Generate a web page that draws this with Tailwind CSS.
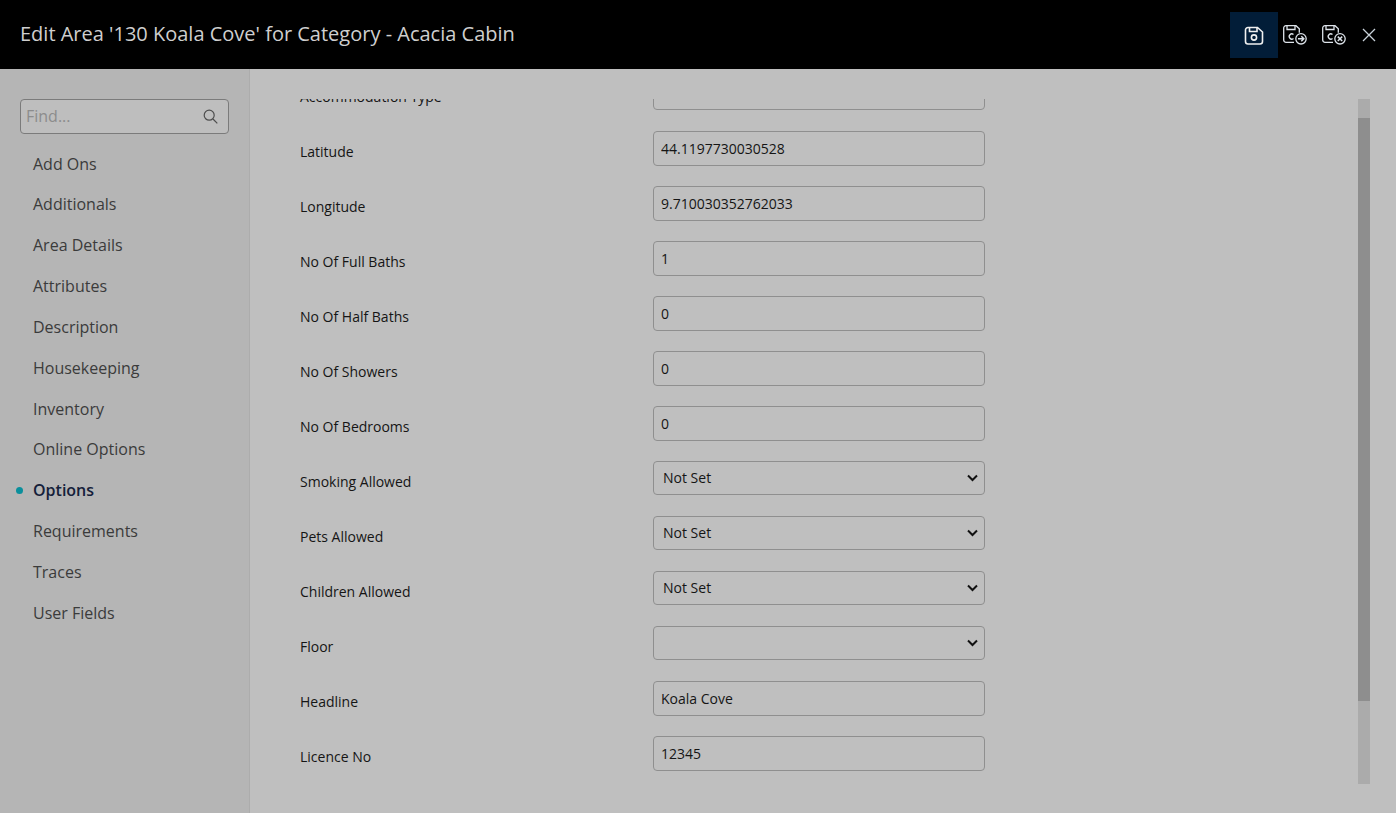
<!DOCTYPE html>
<html lang="en">
<head>
    <meta charset="UTF-8">
    <title>Edit Area</title>
    <script src="https://cdn.jsdelivr.net/npm/@tailwindcss/browser@4"></script>
</head>
<body class="h-[813px] w-[1396px] overflow-hidden bg-[#bfbfbf] font-['Open_Sans',sans-serif] text-[14px] text-[#151515]">

<!-- header -->
<header class="flex h-[69px] items-center justify-between bg-black pl-[20px] pr-[19px]">
    <h1 class="text-[20px] leading-[28px] -mt-[2px] text-[#cfcfcf]">Edit Area '130 Koala Cove' for Category - Acacia Cabin</h1>
    <div class="flex items-center mt-[1px]">
        <button class="flex h-[46px] w-[48px] items-center justify-center bg-[#021d38] text-[#f0f0f0]">
            <svg width="20" height="19" viewBox="0 0 20 19" fill="none" stroke="currentColor" stroke-width="1.600"><path d="M1.500 4A2.500 2.500 0 0 1 4 1.500h9.500l5 4.500v9.500a2.500 2.500 0 0 1-2.500 2.500H4a2.500 2.500 0 0 1-2.500-2.500z"/><path d="M5.500 1.500v4h7.500v-4"/><circle cx="10" cy="11.500" r="2.600"/></svg>
        </button>
        <button class="ml-[4px] flex h-[46px] w-[26px] items-center justify-center text-[#dde3ea]">
            <svg width="24" height="20" viewBox="0 0 24 20" fill="none" stroke="currentColor" stroke-width="1.300"><path d="M11 17.300H3a2.300 2.300 0 0 1-2.300-2.300V3A2.300 2.300 0 0 1 3 .7h10l3.300 3v4"/><path d="M4 .7v3.800h8V.7"/><path d="M10.500 9.500a2.600 2.600 0 1 0 0 4"/><circle cx="18" cy="13.800" r="5.200"/><path d="M15 13.800h5.800M18.300 11.300l2.500 2.500-2.500 2.500" stroke-width="1.500"/></svg>
        </button>
        <button class="ml-[13px] flex h-[46px] w-[26px] items-center justify-center text-[#dde3ea]">
            <svg width="24" height="20" viewBox="0 0 24 20" fill="none" stroke="currentColor" stroke-width="1.300"><path d="M11 17.300H3a2.300 2.300 0 0 1-2.300-2.300V3A2.300 2.300 0 0 1 3 .7h10l3.300 3v4"/><path d="M4 .7v3.800h8V.7"/><path d="M10.500 9.500a2.600 2.600 0 1 0 0 4"/><circle cx="18" cy="13.800" r="5.200"/><path d="M15.800 11.600l4.400 4.400M20.200 11.600l-4.400 4.400" stroke-width="1.500"/></svg>
        </button>
        <button class="ml-[14px] flex h-[46px] w-[16px] items-center justify-center text-[#c9d2da]">
            <svg width="14" height="14" viewBox="0 0 14 14" fill="none" stroke="currentColor" stroke-width="1.300"><path d="M1 1l12 12M13 1L1 13"/></svg>
        </button>
    </div>
</header>

<div class="flex h-[744px]">
    <!-- sidebar -->
    <aside class="w-[250px] shrink-0 border-r border-[#acacac] bg-[#b5b5b5] pt-[30px]">
        <div class="relative ml-[20px] w-[209px]">
            <input type="text" placeholder="Find..." class="h-[35px] w-full rounded-[4px] border border-[#7b7b7b] bg-[#bebebe] pb-[2px] pl-[5px] pr-[30px] text-[16px] placeholder:text-[#8c8c8c]">
            <svg class="absolute right-[11px] top-[10px]" width="15" height="15" viewBox="0 0 15 15" fill="none" stroke="#4d4d4d" stroke-width="1.200"><circle cx="6.200" cy="6.200" r="5"/><path d="M10 10l4.300 4.300"/></svg>
        </div>
        <nav class="mt-[9.150px] text-[16px] text-[#3b3b3b]">
            <a class="flex h-[40.850px] items-center pl-[33px]">Add Ons</a>
            <a class="flex h-[40.850px] items-center pl-[33px]">Additionals</a>
            <a class="flex h-[40.850px] items-center pl-[33px]">Area Details</a>
            <a class="flex h-[40.850px] items-center pl-[33px]">Attributes</a>
            <a class="flex h-[40.850px] items-center pl-[33px]">Description</a>
            <a class="flex h-[40.850px] items-center pl-[33px]">Housekeeping</a>
            <a class="flex h-[40.850px] items-center pl-[33px]">Inventory</a>
            <a class="flex h-[40.850px] items-center pl-[33px]">Online Options</a>
            <a class="flex h-[40.850px] items-center pl-[16px] font-semibold text-[#14203a]"><span class="mr-[10px] h-[7px] w-[7px] rounded-full bg-[#0a8f9c]"></span>Options</a>
            <a class="flex h-[40.850px] items-center pl-[33px]">Requirements</a>
            <a class="flex h-[40.850px] items-center pl-[33px]">Traces</a>
            <a class="flex h-[40.850px] items-center pl-[33px]">User Fields</a>
        </nav>
    </aside>

    <!-- form -->
    <main class="flex min-w-0 flex-1 items-start pt-[30px]">
        <div class="h-[685px] flex-1 overflow-hidden pl-[50px]">
            <div class="-mt-[23px] flex flex-col gap-[20px]">
                <div class="flex h-[35px] items-start"><label class="mt-[10px] w-[353px]">Accommodation Type</label><div class="relative"><select class="h-[34px] w-[332px] appearance-none rounded-[4px] border border-[#8f8f8f] pb-[2px] pl-[9px]"><option></option></select></div></div>
                <div class="flex h-[35px] items-center"><label class="mt-[5px] w-[353px]">Latitude</label><input class="h-[35px] w-[332px] rounded-[4px] border border-[#8f8f8f] px-[7px]" value="44.1197730030528"></div>
                <div class="flex h-[35px] items-center"><label class="mt-[5px] w-[353px]">Longitude</label><input class="h-[35px] w-[332px] rounded-[4px] border border-[#8f8f8f] px-[7px]" value="9.710030352762033"></div>
                <div class="flex h-[35px] items-center"><label class="mt-[5px] w-[353px]">No Of Full Baths</label><input class="h-[35px] w-[332px] rounded-[4px] border border-[#8f8f8f] px-[7px]" value="1"></div>
                <div class="flex h-[35px] items-center"><label class="mt-[5px] w-[353px]">No Of Half Baths</label><input class="h-[35px] w-[332px] rounded-[4px] border border-[#8f8f8f] px-[7px]" value="0"></div>
                <div class="flex h-[35px] items-center"><label class="mt-[5px] w-[353px]">No Of Showers</label><input class="h-[35px] w-[332px] rounded-[4px] border border-[#8f8f8f] px-[7px]" value="0"></div>
                <div class="flex h-[35px] items-center"><label class="mt-[5px] w-[353px]">No Of Bedrooms</label><input class="h-[35px] w-[332px] rounded-[4px] border border-[#8f8f8f] px-[7px]" value="0"></div>
                <div class="flex h-[35px] items-start"><label class="mt-[10px] w-[353px]">Smoking Allowed</label><div class="relative"><select class="h-[34px] w-[332px] appearance-none rounded-[4px] border border-[#8f8f8f] pb-[2px] pl-[9px]"><option>Not Set</option></select><svg class="absolute right-[7px] top-[13px]" width="11" height="8" viewBox="0 0 11 8" fill="none" stroke="#111" stroke-width="2"><path d="M1 1.500l4.500 4.500L10 1.500"/></svg></div></div>
                <div class="flex h-[35px] items-start"><label class="mt-[10px] w-[353px]">Pets Allowed</label><div class="relative"><select class="h-[34px] w-[332px] appearance-none rounded-[4px] border border-[#8f8f8f] pb-[2px] pl-[9px]"><option>Not Set</option></select><svg class="absolute right-[7px] top-[13px]" width="11" height="8" viewBox="0 0 11 8" fill="none" stroke="#111" stroke-width="2"><path d="M1 1.500l4.500 4.500L10 1.500"/></svg></div></div>
                <div class="flex h-[35px] items-start"><label class="mt-[10px] w-[353px]">Children Allowed</label><div class="relative"><select class="h-[34px] w-[332px] appearance-none rounded-[4px] border border-[#8f8f8f] pb-[2px] pl-[9px]"><option>Not Set</option></select><svg class="absolute right-[7px] top-[13px]" width="11" height="8" viewBox="0 0 11 8" fill="none" stroke="#111" stroke-width="2"><path d="M1 1.500l4.500 4.500L10 1.500"/></svg></div></div>
                <div class="flex h-[35px] items-start"><label class="mt-[10px] w-[353px]">Floor</label><div class="relative"><select class="h-[34px] w-[332px] appearance-none rounded-[4px] border border-[#8f8f8f] pb-[2px] pl-[9px]"><option></option></select><svg class="absolute right-[7px] top-[13px]" width="11" height="8" viewBox="0 0 11 8" fill="none" stroke="#111" stroke-width="2"><path d="M1 1.500l4.500 4.500L10 1.500"/></svg></div></div>
                <div class="flex h-[35px] items-center"><label class="mt-[5px] w-[353px]">Headline</label><input class="h-[35px] w-[332px] rounded-[4px] border border-[#8f8f8f] px-[7px]" value="Koala Cove"></div>
                <div class="flex h-[35px] items-center"><label class="mt-[5px] w-[353px]">Licence No</label><input class="h-[35px] w-[332px] rounded-[4px] border border-[#8f8f8f] px-[7px]" value="12345"></div>
            </div>
        </div>
        <!-- scrollbar -->
        <div class="mr-[26px] h-[685px] w-[12px] shrink-0 bg-[#ababab] pt-[19px]">
            <div class="h-[583px] bg-[#8e8e8e]"></div>
        </div>
    </main>
</div>

</body>
</html>
